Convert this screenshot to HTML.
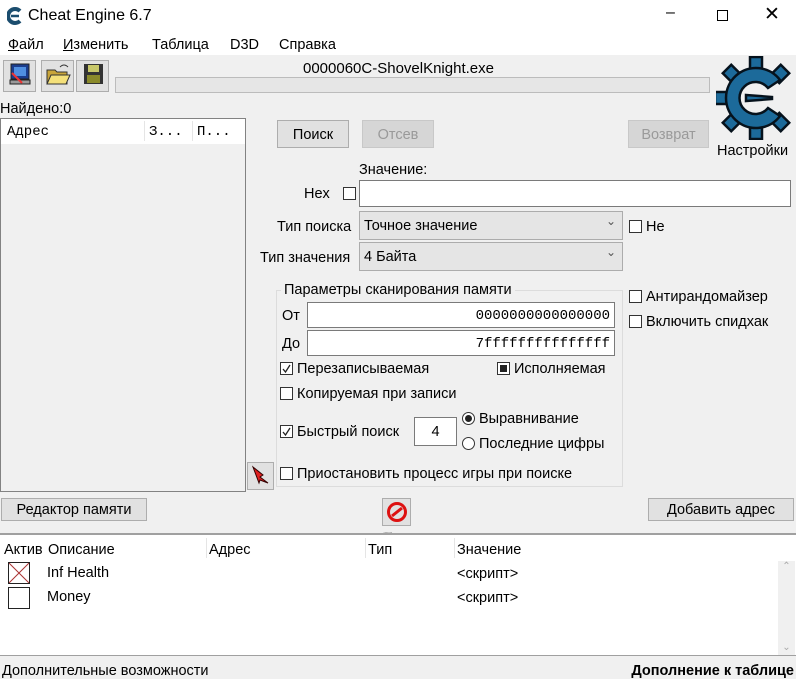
<!DOCTYPE html>
<html><head><meta charset="utf-8"><style>
*{box-sizing:border-box;margin:0;padding:0}
body{width:796px;height:679px;background:#f0f0f0;font-family:"Liberation Sans","Noto Sans CJK SC",sans-serif;font-size:14.5px;color:#000;position:relative;overflow:hidden}
.a{position:absolute;white-space:nowrap}
.t{margin-top:2px}
.btn{position:absolute;background:#e1e1e1;border:1px solid #adadad;text-align:center}
.dis{color:#9a9a9a;background:#d6d6d6;border-color:#c8c8c8}
.inp{position:absolute;background:#fff;border:1px solid #7a7a7a}
.sel{position:absolute;background:#e5e5e5;border:1px solid #acacac;padding-left:4px;line-height:28px}
.sel:after{content:"⌄";position:absolute;right:6px;top:-5px;font-size:12px;color:#555}
.cb{position:absolute;width:13px;height:13px;border:1px solid #333;background:#fff}
.cb.on{background:#fff url() }
.rb{position:absolute;width:13px;height:13px;border:1px solid #333;border-radius:50%;background:#fff}
.mono{font-family:"Liberation Mono",monospace}
</style></head><body>
<div class="a" style="left:0;top:0;width:796px;height:55px;background:#fff"></div>
<svg class="a" style="left:7px;top:7px" width="16" height="18" viewBox="0 0 16 18"><path d="M13 4A7 7 0 1 0 13 14" stroke="#1b4d6e" stroke-width="4" fill="none"/><path d="M4 9h8" stroke="#1b4d6e" stroke-width="2.5"/></svg>
<div class="a" style="left:28px;top:7px;font-size:16px">Cheat Engine 6.7</div>
<div class="a" style="left:666px;top:4px;font-size:16px">–</div>
<div class="a" style="left:717px;top:10px;width:11px;height:11px;border:1px solid #000"></div>
<div class="a" style="left:764px;top:3px;font-size:19px">✕</div>
<div class="a" style="left:8px;top:37px"><u>Ф</u>айл</div>
<div class="a" style="left:63px;top:37px"><u>И</u>зменить</div>
<div class="a" style="left:152px;top:37px">Таблица</div>
<div class="a" style="left:230px;top:37px">D3D</div>
<div class="a" style="left:279px;top:37px">Справка</div>
<div class="btn" style="left:3px;top:60px;width:33px;height:32px"><svg width="28" height="26" viewBox="0 0 28 26"><rect x="5" y="3" width="18" height="15" fill="#1a3c8c" stroke="#222"/><rect x="8" y="6" width="12" height="9" fill="#4f8fe0"/><rect x="4" y="19" width="20" height="4" fill="#999" stroke="#222"/><path d="M6 12l10 10" stroke="#e33" stroke-width="2"/></svg></div>
<div class="btn" style="left:41px;top:60px;width:33px;height:32px"><svg width="28" height="26" viewBox="0 0 28 26"><path d="M3 9h8l2 2h10v12H3z" fill="#c9a53a" stroke="#333"/><path d="M3 23l4-9h19l-4 9z" fill="#f4e07a" stroke="#333"/><path d="M16 6q4-4 8 0" stroke="#333" fill="none"/></svg></div>
<div class="btn" style="left:76px;top:60px;width:33px;height:32px"><svg width="28" height="26" viewBox="0 0 28 26"><rect x="5" y="3" width="19" height="20" fill="#333"/><rect x="9" y="4" width="11" height="7" fill="#c8c86a"/><rect x="8" y="14" width="13" height="8" fill="#8a8a2a"/></svg></div>
<div class="a" style="left:303px;top:60px;font-size:15px">0000060C-ShovelKnight.exe</div>
<div class="a" style="left:115px;top:77px;width:595px;height:16px;background:#e6e6e6;border:1px solid #bcbcbc"></div>
<svg class="a" style="left:716px;top:56px" width="80" height="84" viewBox="0 0 80 84">
<g transform="translate(40,42)" fill="#1c6a9a" stroke="#06121c" stroke-width="2.5">
<g id="th"><rect x="-6" y="-41" width="12" height="14"/></g>
<rect x="-6" y="-41" width="12" height="14" transform="rotate(45)"/>
<rect x="-6" y="-41" width="12" height="14" transform="rotate(-45)"/>
<rect x="-6" y="-41" width="12" height="14" transform="rotate(-90)"/>
<rect x="-6" y="-41" width="12" height="14" transform="rotate(-135)"/>
<rect x="-6" y="-41" width="12" height="14" transform="rotate(180)"/>
<rect x="-6" y="-41" width="12" height="14" transform="rotate(135)"/>
<path d="M24 -18A30 30 0 1 0 24 18L12 10A16 16 0 1 1 12 -10Z"/>
<path d="M-10 -3L16 -1 L16 1 L-10 3Z"/>
</g></svg>
<div class="a" style="left:0;top:101px">Найдено:0</div>
<div class="a" style="left:0;top:118px;width:246px;height:374px;border:1px solid #828282;background:#f0f0f0"></div>
<div class="a mono" style="left:1px;top:119px;width:244px;height:25px;background:#fff;font-size:14px;line-height:27px"><span class="a" style="left:6px">Адрес</span><span class="a" style="left:148px">З...</span><span class="a" style="left:196px">П...</span><span class="a" style="left:143px;top:2px;width:1px;height:20px;background:#e5e5e5"></span><span class="a" style="left:191px;top:2px;width:1px;height:20px;background:#e5e5e5"></span></div>
<div class="btn" style="left:277px;top:120px;width:72px;height:28px;line-height:28px">Поиск</div>
<div class="btn dis" style="left:362px;top:120px;width:72px;height:28px;line-height:28px">Отсев</div>
<div class="btn dis" style="left:628px;top:120px;width:81px;height:28px;line-height:28px">Возврат</div>
<div class="a" style="left:717px;top:143px">Настройки</div>
<div class="a" style="left:359px;top:162px">Значение:</div>
<div class="a" style="left:304px;top:186px">Hex</div>
<div class="cb" style="left:343px;top:187px"></div>
<div class="inp" style="left:359px;top:180px;width:432px;height:27px"></div>
<div class="a" style="left:277px;top:219px">Тип поиска</div>
<div class="sel" style="left:359px;top:211px;width:264px;height:29px">Точное значение</div>
<div class="cb" style="left:629px;top:220px"></div><div class="a" style="left:646px;top:219px">Не</div>
<div class="a" style="left:260px;top:250px">Тип значения</div>
<div class="sel" style="left:359px;top:242px;width:264px;height:29px">4 Байта</div>
<div class="a" style="left:276px;top:290px;width:347px;height:197px;border:1px solid #dcdcdc"></div>
<div class="a" style="left:281px;top:282px;background:#f0f0f0;padding:0 3px">Параметры сканирования памяти</div>
<div class="a" style="left:282px;top:308px">От</div>
<div class="inp mono" style="left:307px;top:302px;width:308px;height:26px;text-align:right;padding-right:4px;line-height:26px;font-size:14px">0000000000000000</div>
<div class="a" style="left:282px;top:336px">До</div>
<div class="inp mono" style="left:307px;top:330px;width:308px;height:26px;text-align:right;padding-right:4px;line-height:26px;font-size:14px">7fffffffffffffff</div>
<div class="cb" style="left:280px;top:362px"><svg width="11" height="11" style="position:absolute;left:0;top:0"><path d="M2 6l2.5 3L9 2" stroke="#222" stroke-width="1.3" fill="none"/></svg></div><div class="a" style="left:297px;top:361px">Перезаписываемая</div>
<div class="cb" style="left:497px;top:362px"><div style="margin:2px;width:7px;height:7px;background:#222"></div></div><div class="a" style="left:514px;top:361px">Исполняемая</div>
<div class="cb" style="left:280px;top:387px"></div><div class="a" style="left:297px;top:386px">Копируемая при записи</div>
<div class="cb" style="left:280px;top:425px"><svg width="11" height="11" style="position:absolute;left:0;top:0"><path d="M2 6l2.5 3L9 2" stroke="#222" stroke-width="1.3" fill="none"/></svg></div><div class="a" style="left:297px;top:424px">Быстрый поиск</div>
<div class="inp" style="left:414px;top:417px;width:43px;height:29px;text-align:center;line-height:29px">4</div>
<div class="rb" style="left:462px;top:412px"><div style="margin:2px;width:7px;height:7px;border-radius:50%;background:#222"></div></div><div class="a" style="left:479px;top:411px">Выравнивание</div>
<div class="rb" style="left:462px;top:437px"></div><div class="a" style="left:479px;top:436px">Последние цифры</div>
<div class="cb" style="left:280px;top:467px"></div><div class="a" style="left:297px;top:466px">Приостановить процесс игры при поиске</div>
<div class="cb" style="left:629px;top:290px"></div><div class="a" style="left:646px;top:289px">Антирандомайзер</div>
<div class="cb" style="left:629px;top:315px"></div><div class="a" style="left:646px;top:314px">Включить спидхак</div>
<div class="btn" style="left:247px;top:462px;width:27px;height:28px"><svg width="24" height="24" viewBox="0 0 24 24"><path d="M4 4l10 8-3 2 8 6-8-3-1 3z" fill="#e02020" stroke="#300" stroke-width="1"/></svg></div>
<div class="btn" style="left:1px;top:498px;width:146px;height:23px;line-height:23px">Редактор памяти</div>
<div class="btn" style="left:382px;top:498px;width:29px;height:28px"><svg width="24" height="24" viewBox="0 0 24 24" style="margin-top:1px"><circle cx="12" cy="12" r="8.5" fill="none" stroke="#d11" stroke-width="3"/><path d="M7 16L17 8" stroke="#d11" stroke-width="3"/></svg></div>
<div class="btn" style="left:648px;top:498px;width:146px;height:23px;line-height:23px">Добавить адрес</div>
<div class="a" style="left:383px;top:526px;font-size:8px;color:#999;letter-spacing:-1px">.......</div>
<div class="a" style="left:0;top:533px;width:796px;height:123px;background:#fff;border-top:2px solid #a0a0a0;border-bottom:1px solid #a0a0a0"></div>
<div class="a" style="left:4px;top:542px">Актив</div>
<div class="a" style="left:46px;top:538px;width:3px;height:20px;background:#fff"></div>
<div class="a" style="left:48px;top:542px">Описание</div>
<div class="a" style="left:206px;top:538px;width:1px;height:20px;background:#e5e5e5"></div>
<div class="a" style="left:209px;top:542px">Адрес</div>
<div class="a" style="left:365px;top:538px;width:1px;height:20px;background:#e5e5e5"></div>
<div class="a" style="left:368px;top:542px">Тип</div>
<div class="a" style="left:454px;top:538px;width:1px;height:20px;background:#e5e5e5"></div>
<div class="a" style="left:457px;top:542px">Значение</div>
<div class="a" style="left:8px;top:562px;width:22px;height:22px;border:1px solid #222"><svg width="20" height="20" style="position:absolute;left:0;top:0"><path d="M0 0L20 20M20 0L0 20" stroke="#a33" stroke-width="1"/></svg></div>
<div class="a" style="left:47px;top:565px">Inf Health</div>
<div class="a" style="left:457px;top:566px">&lt;скрипт&gt;</div>
<div class="a" style="left:8px;top:587px;width:22px;height:22px;border:1px solid #222"></div>
<div class="a" style="left:47px;top:589px">Money</div>
<div class="a" style="left:457px;top:590px">&lt;скрипт&gt;</div>
<div class="a" style="left:778px;top:561px;width:17px;height:94px;background:#f0f0f0;color:#aaa;font-size:10px;text-align:center">⌃<div style="position:absolute;bottom:2px;width:17px">⌄</div></div>
<div class="a" style="left:2px;top:663px">Дополнительные возможности</div>
<div class="a" style="right:2px;top:663px;font-weight:bold">Дополнение к таблице</div>
</body></html>
